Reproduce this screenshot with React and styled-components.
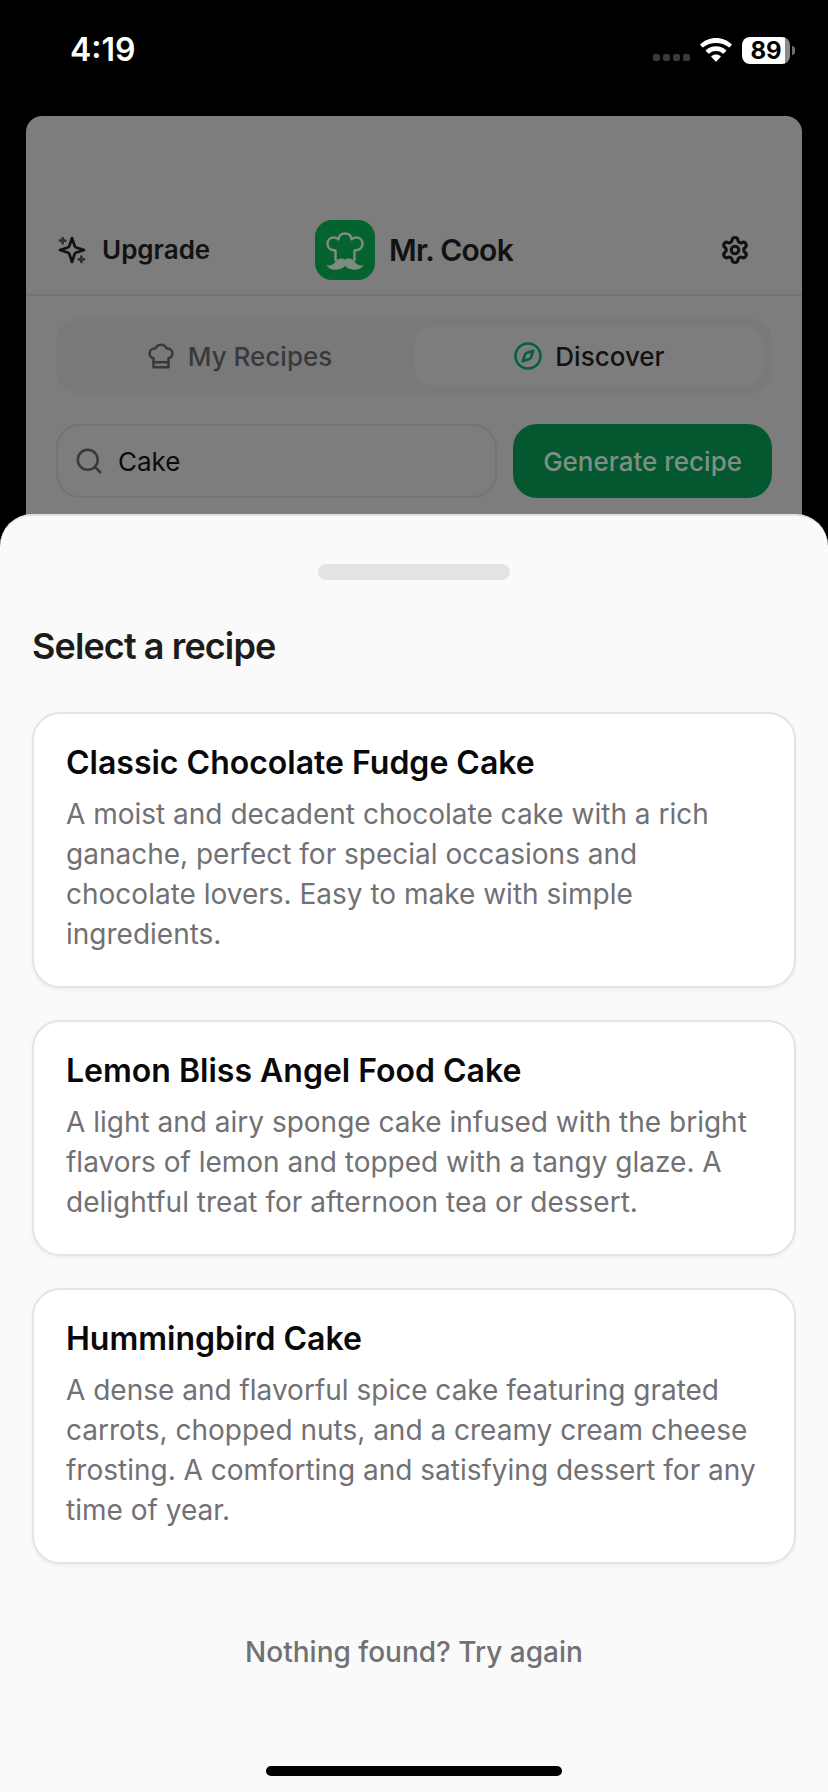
import React from "react";
import styled, { createGlobalStyle } from "styled-components";
import { Settings, Compass, Search } from "lucide-react";

const GlobalStyle = createGlobalStyle`
  *, *::before, *::after { box-sizing: border-box; }
  body { margin: 0; background: #000; font-family: Inter, "Liberation Sans", sans-serif; }
  button, input { font: inherit; color: inherit; border: 0; background: none; padding: 0; margin: 0; }
  h1, h2, h3, p { margin: 0; }
`;

const Screen = styled.div`
  min-height: 100vh;
  display: flex;
  flex-direction: column;
  background: #000;
`;

const StatusBar = styled.header`
  display: flex;
  align-items: center;
  justify-content: space-between;
  height: 116px;
  padding: 0 33px 16px 70px;
  color: #fff;
`;

const Time = styled.time`
  font-size: 32px;
  line-height: 40px;
  font-weight: 600;
`;

const StatusIcons = styled.div`
  display: flex;
  align-items: center;
  gap: 10px;
`;

const SignalDots = styled.div`
  display: flex;
  gap: 3px;
  padding-top: 14px;
`;

const Dot = styled.span`
  width: 7px;
  height: 7px;
  border-radius: 2px;
  background: #3a3a3a;
`;

const Battery = styled.div`
  display: flex;
  align-items: center;
  gap: 2px;
`;

const BatteryLevel = styled.span`
  width: 48px;
  height: 27px;
  border-radius: 8px;
  background: linear-gradient(to right, #fff 90%, #8a8a8a 90%);
  color: #000;
  font-size: 24px;
  line-height: 27px;
  font-weight: 700;
  text-align: center;
`;

const BatteryCap = styled.span`
  width: 3px;
  height: 9px;
  border-radius: 0 4px 4px 0;
  background: #6e6e6e;
`;

const AppPanel = styled.main`
  margin: 0 26px;
  padding-bottom: 48px;
  border-radius: 16px 16px 0 0;
  background: #7d7d7d;
  color: #121212;
`;

const AppHeader = styled.div`
  display: grid;
  grid-template-columns: 1fr auto 1fr;
  align-items: center;
  padding: 104px 30px 14px;
  border-bottom: 2px solid #737373;
`;

const UpgradeButton = styled.button`
  display: flex;
  align-items: center;
  gap: 14px;
  justify-self: start;
  font-size: 26px;
  line-height: 32px;
  font-weight: 600;
`;

const Brand = styled.div`
  display: flex;
  align-items: center;
  gap: 14px;
`;

const BrandName = styled.h1`
  font-size: 30px;
  line-height: 40px;
  font-weight: 600;
  letter-spacing: -0.025em;
`;

const IconButton = styled.button`
  display: flex;
  justify-self: end;
  padding: 8px 22px;
`;

const Content = styled.div`
  display: flex;
  flex-direction: column;
  gap: 30px;
  padding: 22px 30px 0;
`;

const Tabs = styled.div`
  display: grid;
  grid-template-columns: 1fr 1fr;
  padding: 8px;
  border-radius: 24px;
  background: #797979;
`;

const Tab = styled.button`
  display: flex;
  align-items: center;
  justify-content: center;
  gap: 12px;
  height: 60px;
  border-radius: 20px;
  font-size: 26px;
  font-weight: 500;
  background: ${(p) => (p.$active ? "#7d7d7d" : "transparent")};
  color: ${(p) => (p.$active ? "#121212" : "#39393d")};
  svg { color: ${(p) => (p.$active ? "#04603a" : "inherit")}; }
`;

const SearchRow = styled.form`
  display: flex;
  gap: 16px;
`;

const SearchBox = styled.label`
  flex: 1;
  min-width: 0;
  display: flex;
  align-items: center;
  gap: 14px;
  height: 74px;
  padding: 0 16px;
  border: 2px solid #747474;
  border-radius: 24px;
  color: #39393d;
`;

const SearchInput = styled.input`
  flex: 1;
  min-width: 0;
  font-size: 26px;
  color: #0b0b0b;
  outline: none;
`;

const GenerateButton = styled.button`
  height: 74px;
  padding: 0 30px;
  border-radius: 24px;
  background: #04582f;
  color: #7f8f84;
  font-size: 26px;
  font-weight: 500;
`;

const Sheet = styled.section`
  flex: 1;
  display: flex;
  flex-direction: column;
  margin-top: -32px;
  padding: 48px 32px 16px;
  border-top: 2px solid #e0e0e0;
  border-radius: 32px 32px 0 0;
  background: #fafafa;
`;

const Handle = styled.div`
  align-self: center;
  width: 192px;
  height: 16px;
  border-radius: 8px;
  background: #e4e4e5;
`;

const SheetTitle = styled.h2`
  margin: 44px 0;
  font-size: 36px;
  line-height: 44px;
  font-weight: 600;
  letter-spacing: -0.025em;
  color: #1c1c1a;
`;

const RecipeList = styled.div`
  display: flex;
  flex-direction: column;
  gap: 32px;
`;

const RecipeCard = styled.button`
  display: flex;
  flex-direction: column;
  gap: 14px;
  padding: 32px;
  border: 2px solid #e4e4e7;
  border-radius: 28px;
  background: #fff;
  box-shadow: 0 2px 4px rgba(0, 0, 0, 0.05);
  text-align: left;
`;

const RecipeName = styled.h3`
  font-size: 32px;
  line-height: 34px;
  font-weight: 600;
  color: #09090b;
`;

const RecipeText = styled.p`
  font-size: 28px;
  line-height: 40px;
  color: #717175;
`;

const RetryButton = styled.button`
  align-self: center;
  margin: 68px 0 60px;
  font-size: 28px;
  line-height: 40px;
  font-weight: 500;
  color: #717175;
`;

const HomeIndicator = styled.div`
  align-self: center;
  width: 296px;
  height: 10px;
  margin-top: auto;
  border-radius: 5px;
  background: #000;
`;

const WifiIcon = () => (
  <svg width="32" height="25" viewBox="0 0 32 25" fill="#fff" aria-hidden="true">
    <path d="M16 0C9.900 0 4.300 2.400 0.300 6.300Q0 6.700 0.300 7.100L2.500 9.300Q2.900 9.600 3.300 9.300C6.600 6.200 11 4.900 16 4.900S25.400 6.200 28.700 9.300Q29.100 9.600 29.500 9.300L31.700 7.100Q32 6.700 31.700 6.300C27.700 2.400 22.100 0 16 0Z" />
    <path d="M16 8.200C12.100 8.200 8.500 9.700 5.800 12.200Q5.500 12.600 5.800 13L8.400 15.600Q8.800 15.900 9.200 15.600C11.100 13.900 13.300 13.100 16 13.100S20.900 13.900 22.800 15.600Q23.200 15.900 23.600 15.600L26.200 13Q26.500 12.600 26.200 12.200C23.500 9.700 19.900 8.200 16 8.200Z" />
    <path d="M16 16.500C14.200 16.500 12.600 17.100 11.400 18.100Q11 18.500 11.400 18.900L15.600 23.400Q16 23.800 16.400 23.400L20.600 18.900Q21 18.500 20.600 18.100C19.400 17.100 17.800 16.500 16 16.500Z" />
  </svg>
);

const SparklesIcon = () => (
  <svg
    width="32" height="32" viewBox="0 0 24 24" fill="none" stroke="currentColor"
    strokeWidth="2" strokeLinecap="round" strokeLinejoin="round" aria-hidden="true"
  >
    <path d="m12 3-1.912 5.813a2 2 0 0 1-1.275 1.275L3 12l5.813 1.912a2 2 0 0 1 1.275 1.275L12 21l1.912-5.813a2 2 0 0 1 1.275-1.275L21 12l-5.813-1.912a2 2 0 0 1-1.275-1.275L12 3Z" />
    <path d="M5 3v4M3 5h4M19 17v4M17 19h4" strokeWidth="2" stroke="#303030" />
  </svg>
);

const ChefHatIcon = () => (
  <svg
    width="30" height="30" viewBox="0 0 24 24" fill="none" stroke="currentColor"
    strokeWidth="2" strokeLinecap="round" strokeLinejoin="round" aria-hidden="true"
  >
    <path d="M6 13.870A4 4 0 0 1 7.410 6a5.110 5.110 0 0 1 1.050-1.540 5 5 0 0 1 7.080 0A5.110 5.110 0 0 1 16.590 6 4 4 0 0 1 18 13.870V21H6Z" />
    <path d="M6 17h12" />
  </svg>
);

const BrandLogo = () => (
  <svg width="60" height="60" viewBox="0 0 60 60" aria-hidden="true">
    <rect width="60" height="60" rx="17" fill="#04632f" />
    <path
      d="M20.500 41V30.500C15.500 30.500 12.500 27.500 12.500 23.800C12.500 19.800 15.500 17.500 18.700 17.500C20.800 17.500 22.300 18.200 23.500 19.300C23.800 15.500 26.500 13.500 30 13.500S36.200 15.500 36.500 19.300C37.700 18.200 39.200 17.500 41.300 17.500C44.500 17.500 47.500 19.800 47.500 23.800C47.500 27.500 44.500 30.500 39.500 30.500V41"
      fill="none" stroke="#7d8c80" strokeWidth="2.500" strokeLinejoin="round"
    />
    <path
      d="M30 40C28 38 23.500 38 21 41C18.500 45 14.500 46.500 11.500 44.500C13 49 18 50.300 23 49.500C26 49 28.500 47.500 30 46C31.500 47.500 34 49 37 49.500C42 50.300 47 49 48.500 44.500C45.500 46.500 41.500 45 39 41C36.500 38 32 38 30 40Z"
      fill="#7d8c80"
    />
  </svg>
);

const recipes = [
  {
    name: "Classic Chocolate Fudge Cake",
    text: "A moist and decadent chocolate cake with a rich ganache, perfect for special occasions and chocolate lovers. Easy to make with simple ingredients.",
  },
  {
    name: "Lemon Bliss Angel Food Cake",
    text: "A light and airy sponge cake infused with the bright flavors of lemon and topped with a tangy glaze. A delightful treat for afternoon tea or dessert.",
  },
  {
    name: "Hummingbird Cake",
    text: "A dense and flavorful spice cake featuring grated carrots, chopped nuts, and a creamy cream cheese frosting. A comforting and satisfying dessert for any time of year.",
  },
];

export default function App() {
  return (
    <Screen>
      <GlobalStyle />
      <StatusBar>
        <Time>4:19</Time>
        <StatusIcons>
          <SignalDots>
            <Dot /><Dot /><Dot /><Dot />
          </SignalDots>
          <WifiIcon />
          <Battery>
            <BatteryLevel>89</BatteryLevel>
            <BatteryCap />
          </Battery>
        </StatusIcons>
      </StatusBar>

      <AppPanel>
        <AppHeader>
          <UpgradeButton type="button">
            <SparklesIcon />
            Upgrade
          </UpgradeButton>
          <Brand>
            <BrandLogo />
            <BrandName>Mr. Cook</BrandName>
          </Brand>
          <IconButton type="button" aria-label="Settings">
            <Settings size={30} strokeWidth={2.5} />
          </IconButton>
        </AppHeader>
        <Content>
          <Tabs role="tablist">
            <Tab type="button" role="tab" aria-selected="false">
              <ChefHatIcon />
              My Recipes
            </Tab>
            <Tab type="button" role="tab" aria-selected="true" $active>
              <Compass size={30} />
              Discover
            </Tab>
          </Tabs>
          <SearchRow onSubmit={(e) => e.preventDefault()}>
            <SearchBox>
              <Search size={30} />
              <SearchInput type="text" aria-label="Search recipes" defaultValue="Cake" />
            </SearchBox>
            <GenerateButton type="submit">Generate recipe</GenerateButton>
          </SearchRow>
        </Content>
      </AppPanel>

      <Sheet role="dialog" aria-labelledby="sheet-title">
        <Handle />
        <SheetTitle id="sheet-title">Select a recipe</SheetTitle>
        <RecipeList>
          {recipes.map((r) => (
            <RecipeCard type="button" key={r.name}>
              <RecipeName>{r.name}</RecipeName>
              <RecipeText>{r.text}</RecipeText>
            </RecipeCard>
          ))}
        </RecipeList>
        <RetryButton type="button">Nothing found? Try again</RetryButton>
        <HomeIndicator />
      </Sheet>
    </Screen>
  );
}
